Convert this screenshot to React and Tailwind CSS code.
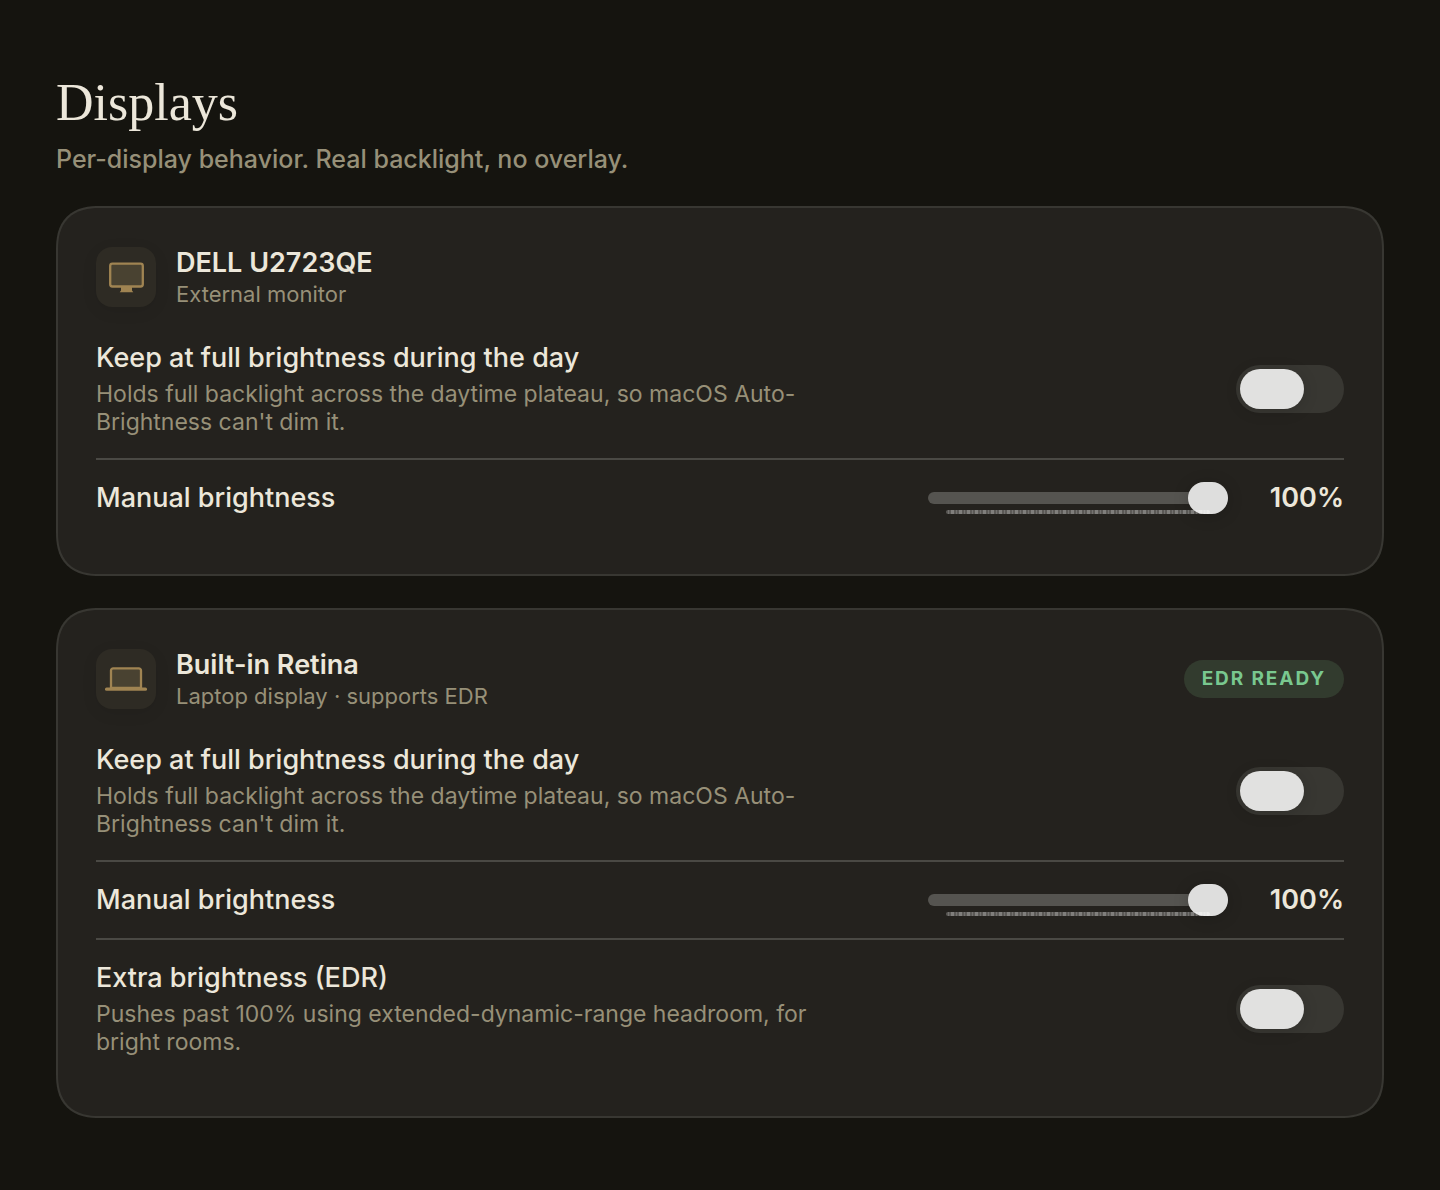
import { useId, useState } from "react";

const KEEP_HINT =
    "Holds full backlight across the daytime plateau, so macOS Auto-Brightness can't dim it.";

const EDR_HINT =
    "Pushes past 100% using extended-dynamic-range headroom, for bright rooms.";

function MonitorIcon() {
    return (
        <svg width="36" height="32" viewBox="0 0 36 32" aria-hidden="true">
            <path d="M13 26h11v3.500l1.300 1.700h-13.600l1.300-1.700z" fill="#a08452" />
            <rect x="2.200" y="2.700" width="32.600" height="22.800" rx="2.200" fill="#494231" stroke="#a08452" strokeWidth="2.300" />
        </svg>
    );
}

function LaptopIcon() {
    return (
        <svg width="42" height="26" viewBox="0 0 42 26" aria-hidden="true">
            <path d="M6 22V4.500a2.200 2.200 0 0 1 2.200-2.200h25.600a2.200 2.200 0 0 1 2.200 2.200V22z" fill="#494231" stroke="#a08452" strokeWidth="2.300" />
            <rect x="0" y="21.500" width="42" height="3.300" rx="1.500" fill="#a08452" />
        </svg>
    );
}

function SettingText({ id, title, hint }) {
    return (
        <label htmlFor={id} className="block max-w-[720px]">
            <span className="block text-[27px] leading-8 font-medium text-[#ece7da]">{title}</span>
            {hint && <span className="mt-[6px] block text-[23px] leading-7 text-[#979078]">{hint}</span>}
        </label>
    );
}

function ToggleRow({ title, hint }) {
    const id = useId();
    const [on, setOn] = useState(false);

    return (
        <div className="flex items-center justify-between gap-8 py-[22px]">
            <SettingText id={id} title={title} hint={hint} />
            <input
                id={id}
                type="checkbox"
                role="switch"
                checked={on}
                onChange={(e) => setOn(e.target.checked)}
                className="h-12 w-[108px] shrink-0 cursor-pointer appearance-none rounded-full bg-[#383732] p-1 before:block before:h-10 before:w-16 before:rounded-full before:bg-[#e1e1e0] before:shadow-[0_2px_16px_rgba(0,0,0,0.14)] before:transition-transform checked:bg-[#a08452] checked:before:translate-x-9"
            />
        </div>
    );
}

function BrightnessRow() {
    const id = useId();
    const [value, setValue] = useState(100);

    return (
        <div className="flex items-center justify-between gap-8 py-[22px]">
            <SettingText id={id} title="Manual brightness" />
            <div className="flex items-center">
                <div className="relative h-8 w-[300px]">
                    <input
                        id={id}
                        type="range"
                        min="0"
                        max="100"
                        value={value}
                        onChange={(e) => setValue(Number(e.target.value))}
                        className="block h-8 w-full cursor-pointer appearance-none bg-transparent [&::-webkit-slider-runnable-track]:h-3 [&::-webkit-slider-runnable-track]:rounded-full [&::-webkit-slider-runnable-track]:bg-[#555450] [&::-webkit-slider-thumb]:-mt-[10px] [&::-webkit-slider-thumb]:h-8 [&::-webkit-slider-thumb]:w-10 [&::-webkit-slider-thumb]:appearance-none [&::-webkit-slider-thumb]:rounded-full [&::-webkit-slider-thumb]:bg-[#dededd] [&::-webkit-slider-thumb]:shadow-[0_2px_16px_rgba(0,0,0,0.18)]"
                    />
                    {/* tick marks */}
                    <div className="pointer-events-none absolute inset-x-[18px] bottom-0 h-1 rounded-full bg-[repeating-linear-gradient(90deg,rgba(255,255,255,0.25)_0_2px,rgba(255,255,255,0.36)_2px_3px,rgba(255,255,255,0.25)_3px_5px,rgba(255,255,255,0.42)_5px_8px)]" />
                </div>
                <output htmlFor={id} className="w-[116px] text-right text-[27px] leading-8 font-semibold text-[#ece7da]">
                    {value}%
                </output>
            </div>
        </div>
    );
}

function DisplayCard({ icon, name, kind, badge, children }) {
    return (
        <section className="rounded-[44px] border-2 border-[#383732] bg-[#24221e] p-[38px] [corner-shape:superellipse(1.3)]">
            <header className="mb-3 flex items-center gap-5">
                <div className="flex size-[60px] shrink-0 items-center justify-center rounded-2xl bg-[#2e2b24] shadow-[0_4px_16px_rgba(0,0,0,0.08)]">
                    {icon}
                </div>
                <div className="grow">
                    <h2 className="text-[27px] leading-[34px] font-semibold text-[#ece7da]">{name}</h2>
                    <p className="text-[22px] leading-7 text-[#979078]">{kind}</p>
                </div>
                {badge && (
                    <span className="rounded-full bg-[#323b2e] px-[18px] py-[5px] text-[19px] leading-7 font-bold tracking-widest text-[#79c88f]">
                        {badge}
                    </span>
                )}
            </header>
            <div className="divide-y-2 divide-[#4a4944]">{children}</div>
        </section>
    );
}

export default function App() {
    return (
        <main className="min-h-screen bg-[#15140f] px-14 pt-[70px] pb-[72px] font-['Inter',sans-serif]">
            <h1 className="font-['Liberation_Serif',serif] text-[52px] leading-[66px] text-[#ece7da]">Displays</h1>
            <p className="mt-[6px] text-[25px] leading-[34px] font-medium text-[#979078]">
                Per-display behavior. Real backlight, no overlay.
            </p>

            <div className="mt-[30px] space-y-8">
                <DisplayCard icon={<MonitorIcon />} name="DELL U2723QE" kind="External monitor">
                    <ToggleRow title="Keep at full brightness during the day" hint={KEEP_HINT} />
                    <BrightnessRow />
                </DisplayCard>

                <DisplayCard
                    icon={<LaptopIcon />}
                    name="Built-in Retina"
                    kind="Laptop display · supports EDR"
                    badge="EDR READY"
                >
                    <ToggleRow title="Keep at full brightness during the day" hint={KEEP_HINT} />
                    <BrightnessRow />
                    <ToggleRow title="Extra brightness (EDR)" hint={EDR_HINT} />
                </DisplayCard>
            </div>
        </main>
    );
}
